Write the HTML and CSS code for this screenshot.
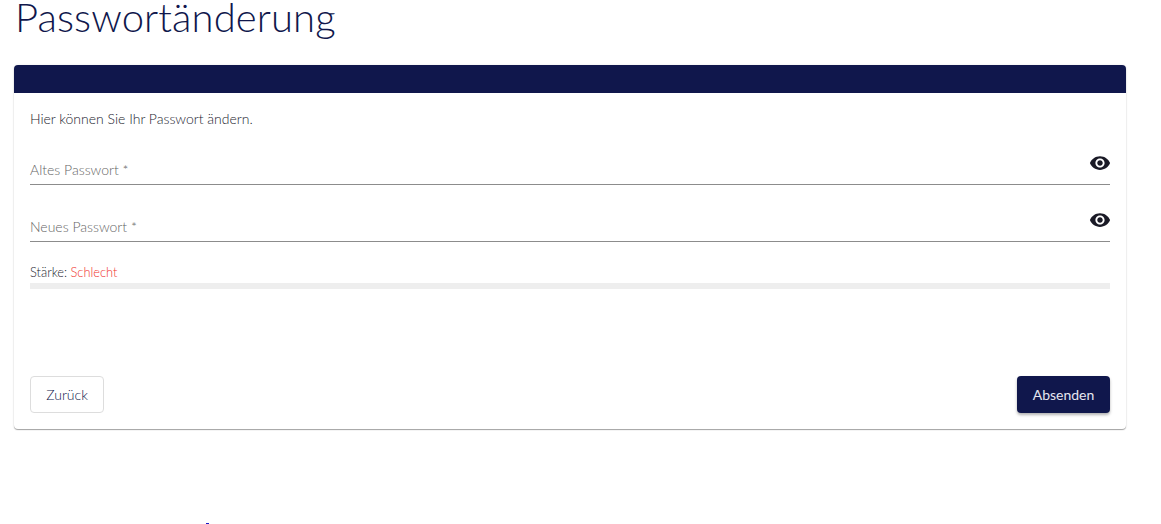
FILE: index.html
```html
<!DOCTYPE html>
<html lang="de">
<head>
  <meta charset="UTF-8">
  <title>Passwortänderung</title>
  <link rel="stylesheet" href="styles.css">
</head>
<body>
  <h1 class="page-title">Passwortänderung</h1>

  <div class="card">
    <div class="card-header"></div>
    <div class="card-body">
      <p class="intro">Hier können Sie Ihr Passwort ändern.</p>

      <div class="field">
        <span class="field-label">Altes Passwort *</span>
        <svg class="eye" viewBox="0 0 24 24" width="22" height="22"><path d="M12 4.5C7 4.5 2.73 7.61 1 12c1.73 4.39 6 7.5 11 7.5s9.27-3.11 11-7.5c-1.73-4.39-6-7.5-11-7.5zM12 17c-2.76 0-5-2.24-5-5s2.24-5 5-5 5 2.24 5 5-2.24 5-5 5zm0-8c-1.66 0-3 1.34-3 3s1.34 3 3 3 3-1.34 3-3-1.34-3-3-3z"/></svg>
      </div>

      <div class="field">
        <span class="field-label">Neues Passwort *</span>
        <svg class="eye" viewBox="0 0 24 24" width="22" height="22"><path d="M12 4.5C7 4.5 2.73 7.61 1 12c1.73 4.39 6 7.5 11 7.5s9.27-3.11 11-7.5c-1.73-4.39-6-7.5-11-7.5zM12 17c-2.76 0-5-2.24-5-5s2.24-5 5-5 5 2.24 5 5-2.24 5-5 5zm0-8c-1.66 0-3 1.34-3 3s1.34 3 3 3 3-1.34 3-3-1.34-3-3-3z"/></svg>
      </div>

      <div class="strength">Stärke: <span class="strength-value">Schlecht</span></div>
      <div class="strength-bar"></div>

      <div class="actions">
        <button class="btn btn-back">Zurück</button>
        <button class="btn btn-submit">Absenden</button>
      </div>
    </div>
  </div>

  <span class="stray-dot"></span>
</body>
</html>
```

FILE: styles.css
```css
* {
  margin: 0;
  padding: 0;
  box-sizing: border-box;
}

html, body {
  height: 524px;
  overflow: hidden;
}

body {
  font-family: Lato, Arial, sans-serif;
  font-weight: 300;
  color: #10174c;
  background: #fff;
  padding: 0 35px 0 14px;
}

.page-title {
  font-size: 40px;
  font-weight: 300;
  line-height: 34px;
  height: 65px;
  padding-left: 1px;
  letter-spacing: 0.1px;
  color: #10174c;
}

/* Card */
.card {
  height: 364px;
  background: #fff;
  border-radius: 4px;
  box-shadow: 0 1px 1px rgba(0, 0, 0, 0.35), 0 0 3px rgba(0, 0, 0, 0.08);
  display: flex;
  flex-direction: column;
}

.card-header {
  height: 28px;
  background: #10174c;
  border-radius: 4px 4px 0 0;
}

.card-body {
  flex: 1;
  padding: 17px 16px 16px;
  display: flex;
  flex-direction: column;
}

.intro {
  font-size: 14px;
  line-height: 18px;
  color: #1c1c2e;
}

/* Fields */
.field {
  height: 37px;
  margin-top: 20px;
  border-bottom: 1px solid #8c8c8c;
  display: flex;
  justify-content: space-between;
  align-items: flex-start;
}

.field + .field {
  margin-top: 20px;
}

.field-label {
  font-size: 14px;
  line-height: 18px;
  padding-top: 13px;
  color: #666;
}

.eye {
  fill: #1a1a26;
  margin-top: 4px;
  margin-right: -1px;
}

/* Strength */
.strength {
  font-size: 12.8px;
  line-height: 16px;
  margin-top: 22px;
  margin-bottom: 1px;
  color: #1c1c2e;
}

.strength-value {
  color: #f0302a;
}

.strength-bar {
  height: 6px;
  margin-top: 2px;
  background: #eee;
}

/* Buttons */
.actions {
  margin-top: auto;
  display: flex;
  justify-content: space-between;
}

.btn {
  font-family: inherit;
  font-size: 14px;
  font-weight: 300;
  height: 37px;
  border-radius: 4px;
  cursor: pointer;
}

.btn-back {
  width: 74px;
  background: #fff;
  color: #10174c;
  border: 1px solid #ddd;
}

.btn-submit {
  width: 93px;
  background: #10174c;
  color: #e6e7f0;
  border: none;
  font-weight: 400;
  box-shadow: 0 2px 3px rgba(0, 0, 0, 0.3);
}

/* Speck of something cut off at the fold */
.stray-dot {
  position: absolute;
  left: 206px;
  top: 523px;
  width: 3px;
  height: 1px;
  background: #1a1ac8;
}
```
